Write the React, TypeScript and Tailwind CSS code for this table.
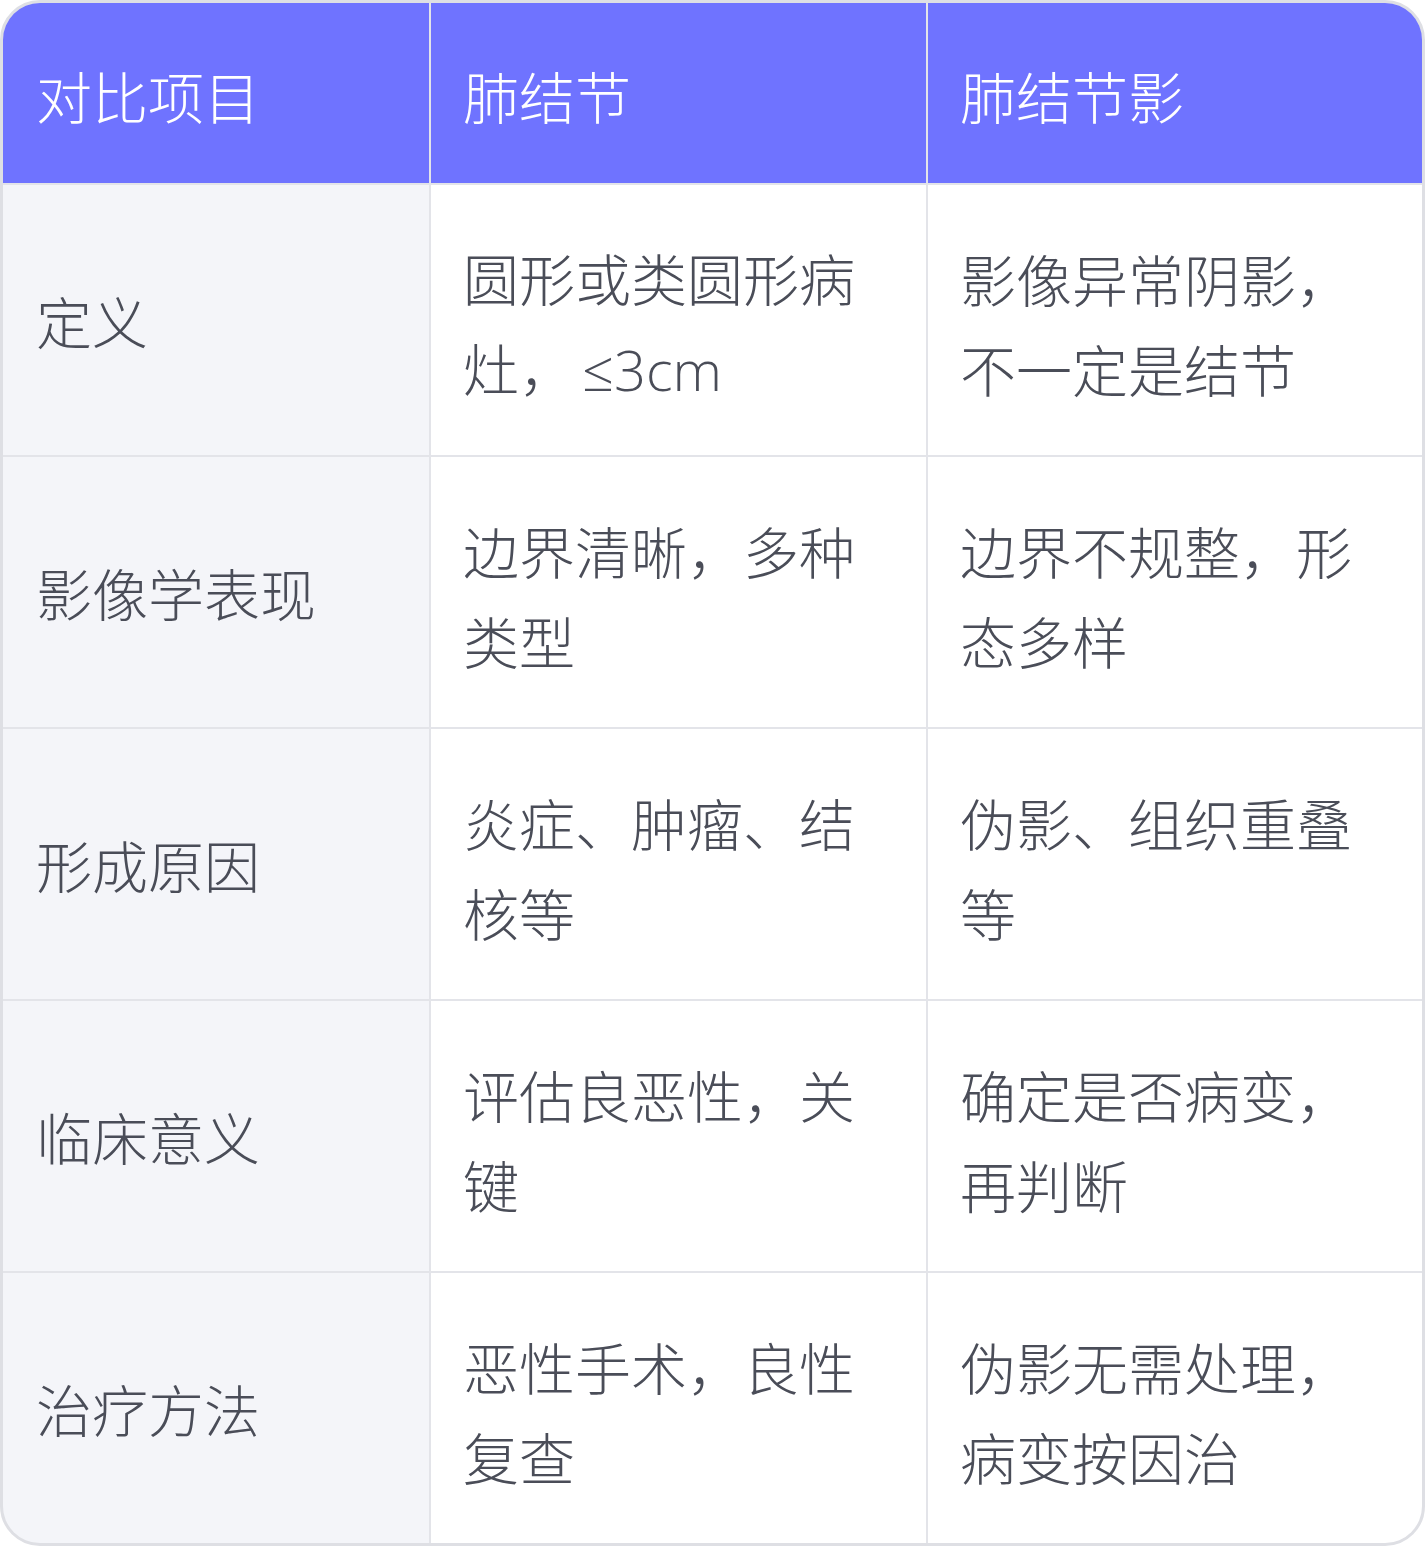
import type { ReactNode } from 'react'

const headers = ['对比项目', '肺结节', '肺结节影']

const latin = { fontFamily: '"Open Sans", "Noto Sans CJK SC", sans-serif' }

const rows: ReactNode[][] = [
  [
    '定义',
    <>
      圆形或类圆形病灶，<span className="font-light ml-[7px]" style={latin}>≤3cm</span>
    </>,
    '影像异常阴影，不一定是结节',
  ],
  ['影像学表现', '边界清晰，多种类型', '边界不规整，形态多样'],
  ['形成原因', '炎症、肿瘤、结核等', '伪影、组织重叠等'],
  ['临床意义', '评估良恶性，关键', '确定是否病变，再判断'],
  ['治疗方法', '恶性手术，良性复查', '伪影无需处理，病变按因治'],
]

export default function App() {
  return (
    <div className="w-[1425px] h-[1546px] bg-white">
      <div
        className="w-full h-full border-[3px] border-[#dedfe4] rounded-[40px] overflow-hidden bg-[#e3e4e9] grid grid-cols-[426px_495px_1fr] grid-rows-[180px_repeat(5,270px)] gap-[2px] font-light"
        style={{ fontFamily: '"Noto Sans CJK SC", sans-serif' }}
      >
        {headers.map((h, i) => (
          <div
            key={h}
            className={`bg-[#6f73ff] text-white text-[56px] leading-[90px] flex items-center pt-[4px] ${i === 0 ? 'pl-[33px]' : 'pl-[32px]'}`}
          >
            {h}
          </div>
        ))}
        {rows.map((r, ri) =>
          r.map((cell, i) => (
            <div
              key={ri + '-' + i}
              className={`flex items-center text-[56px] leading-[90px] text-[#4a4d58] ${
                i === 0 ? 'bg-[#f4f5f9] pl-[33px] pt-[0px]' : 'bg-white pl-[32px] pr-[36px] pt-[6px]'
              }`}
            >
              <span>{cell}</span>
            </div>
          ))
        )}
      </div>
    </div>
  )
}
